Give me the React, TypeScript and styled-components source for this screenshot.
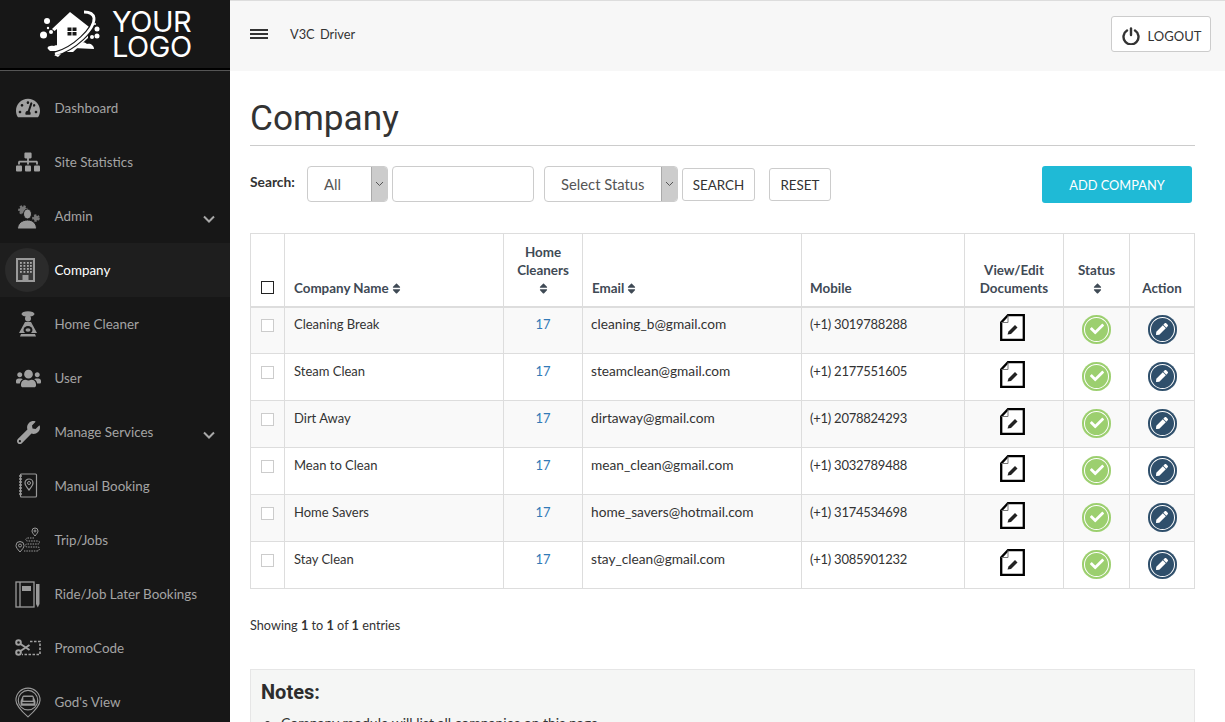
import React from 'react';
import styled, { createGlobalStyle } from 'styled-components';
import { FaTachometerAlt, FaSitemap, FaUsers, FaWrench, FaPen, FaCheck, FaSort } from 'react-icons/fa';

const Global = createGlobalStyle`
  html, body { margin: 0; padding: 0; background: #fff; overflow: hidden; }
  * { box-sizing: border-box; }
  body { font-family: "Lato", "Liberation Sans", sans-serif; color: #333; }
`;

const Page = styled.div`display: flex; width: 1225px; height: 722px; overflow: hidden;`;
const Sidebar = styled.aside`width: 230px; flex: none; background: #171717; display: flex; flex-direction: column;`;
const LogoBar = styled.div`
  height: 71px; flex: none; display: flex; align-items: center; gap: 12px; padding: 0 0 2px 40px;
  border-bottom: 1px solid #555; box-shadow: inset 0 -2px 0 #000;
`;
const LogoText = styled.div`color: #fff; font: 400 29px/25px "Inter", "Liberation Sans", sans-serif; letter-spacing: -0.5px; margin-top: 0;`;
const Menu = styled.nav`display: flex; flex-direction: column; padding-top: 10px;`;
const Item = styled.div<{ $active?: boolean }>`
  height: 54px; display: flex; align-items: center; position: relative; padding: 0 15px;
  background: ${p => (p.$active ? '#1e1e1e' : 'transparent')};
  color: ${p => (p.$active ? '#fff' : '#a4a4a4')};
  font-size: 13.4px;
`;
const IconSlot = styled.span<{ $active?: boolean }>`
  width: 26px; height: 44px; flex: none; display: flex; align-items: center; justify-content: center; margin-right: 13.5px; color: #a0a0a0; position: relative;
  &::before { content: ${p => (p.$active ? '""' : 'none')}; position: absolute; left: -10px; top: 0; width: 44px; height: 44px; border-radius: 50%; background: #2b2b2b; }
  svg { position: relative; }
`;
const ItemLabel = styled.span`flex: 1; white-space: nowrap;`;
const SubChevron = styled.svg`width: 12px; height: 8px; margin: 5px 0 0; fill: none; stroke: #a8a8a8; stroke-width: 2;`;
const Main = styled.main`flex: 1; min-width: 0; display: flex; flex-direction: column;`;
const TopBar = styled.header`
  height: 71px; flex: none; background: #f7f7f7; border-top: 1px solid #ddd; display: flex; align-items: center; padding: 0 14px 4px 20px;
`;
const Burger = styled.span`width: 18px; height: 10px; border-top: 2px solid #333; border-bottom: 2px solid #333; position: relative; margin-right: 22px;
  &::after { content: ""; position: absolute; left: 0; right: 0; top: 2px; height: 2px; background: #333; }
`;
const Brand = styled.span`font-size: 12.8px; color: #333; flex: 1; word-spacing: 2px;`;
const Logout = styled.button`
  width: 100px; height: 36px; background: #fff; border: 1px solid #ccc; border-radius: 3px; display: flex; align-items: center; justify-content: center; gap: 8px;
  font: 400 13px "Lato", sans-serif; color: #333; padding: 3px 0 0 1px;
`;
const Content = styled.div`padding: 0 30px 0 20px; display: flex; flex-direction: column;`;
const Title = styled.h1`
  margin: 0; height: 75px; padding-top: 25px; font: 400 35.2px/44px "Roboto", sans-serif; color: #333; border-bottom: 1px solid #ccc;
`;
const SearchRow = styled.div`display: flex; align-items: center; height: 38px; margin-top: 19px; padding-right: 3px;`;
const SearchLabel = styled.b`font-size: 13.8px; color: #333; width: 57px; margin-top: -5px;`;
const SelectBox = styled.div<{ $w: number }>`
  width: ${p => p.$w}px; height: 36px; border: 1px solid #ccc; border-radius: 4px; display: flex; align-items: center; justify-content: space-between; background: #fff; font-size: 14.8px; color: #555; padding-left: 16px; overflow: hidden;
`;
const Arrow = styled.span`width: 16px; height: 34px; background: #ccc; color: #555; border-left: 1px solid #aaa; display: flex; align-items: center; justify-content: center; svg { display: block; }`;
const TextInput = styled.input`width: 142px; height: 36px; border: 1px solid #ccc; border-radius: 4px; margin: 0 10px 0 4px; background: #fff;`;
const PlainButton = styled.button<{ $w: number; $ml: number }>`
  width: ${p => p.$w}px; margin-left: ${p => p.$ml}px; height: 33px; background: #fff; border: 1px solid #ccc; border-radius: 3px; font: 400 13.4px "Lato", sans-serif; color: #333; padding: 2px 0 0;
`;
const AddButton = styled.button`
  margin-left: auto; width: 150px; height: 37px; background: #1fbad6; border: 0; border-radius: 3px; color: #fff; font: 400 12.8px "Lato", sans-serif; padding: 1px 0 0;
`;
const Table = styled.table`
  width: 944px; margin-top: 30px; border-collapse: collapse; table-layout: fixed; font-size: 13px; border: 1px solid #ddd;
`;
const Th = styled.th<{ $center?: boolean; $tight?: boolean }>`
  height: 73px; border: 1px solid #ddd; border-bottom: 2px solid #ddd; vertical-align: bottom; padding: 8px 9px 9px ${p => (p.$tight ? 8 : 9)}px;
  text-align: ${p => (p.$center ? 'center' : 'left')}; font-size: 13.4px; line-height: 18px; font-weight: 700; color: #3f4a55;
`;
const Td = styled.td<{ $center?: boolean; $size?: number; $tight?: boolean }>`
  height: 47px; border: 1px solid #ddd; padding: 0 9px 13px ${p => (p.$tight ? 8 : 9)}px; text-align: ${p => (p.$center ? 'center' : 'left')}; vertical-align: middle; color: #333;
  font-size: ${p => p.$size ?? 13}px;
`;
const PhoneTd = styled(Td)`letter-spacing: -0.25px;`;
const IconTd = styled.td`height: 47px; border: 1px solid #ddd; padding: 0 0 2px; text-align: center; vertical-align: middle; svg { display: block; margin: 0 auto; }`;
const DocTd = styled(IconTd)`padding: 0 3px 5px 0;`;
const Row = styled.tr<{ $odd: boolean }>`background: ${p => (p.$odd ? '#f9f9f9' : '#fff')};`;
const Count = styled.a`color: #337ab7;`;
const RowCheck = styled.span`display: block; margin: 3px auto 0; width: 13px; height: 13px; border: 1px solid #ccc; background: #fff;`;
const HeadCheck = styled.span`display: block; margin: 0 auto 3px; width: 13px; height: 13px; border: 1px solid #222; background: #fff;`;
const SortMark = styled.span`display: inline-block; vertical-align: -2px; font-size: 13px; line-height: 0; color: #3f4a55; margin-left: 1px; svg { display: block; }`;
const Round = styled.span<{ $c: string }>`
  display: flex; margin: 0 auto; width: 29px; height: 29px; border-radius: 50%; background: ${p => p.$c}; align-items: center; justify-content: center; color: #fff; box-shadow: inset 0 0 0 2px ${p => p.$c}, inset 0 0 0 3px #fff;
`;
const Showing = styled.p`margin: 27px 0 0; font-size: 12.7px; line-height: 18px; color: #333;`;
const Notes = styled.section`margin-top: 35px; background: #f5f6f5; border: 1px solid #e6e6e6; padding: 10px 10px; height: 120px;`;
const NotesTitle = styled.h3`margin: 0; font: 700 20px/24px "Roboto", sans-serif; color: #2d2d2d;`;
const NotesList = styled.ul`margin: 10px 0 0; padding-left: 20px; font-size: 14px;`;

const CompanyIcon = () => (
  <svg width="24" height="24" viewBox="0 0 24 24" fill="none"><rect x="1" y="1" width="17" height="22" stroke="#9a9a9a" strokeWidth="2" fill="#3a3a3a" />
    {[4, 7, 10, 13].map(y => [4, 7.5, 11, 14].map(x => <rect key={`${x}-${y}`} x={x} y={y} width="1.8" height="1.8" fill="#aaa" />))}
    <rect x="6.500" y="17" width="6" height="6" fill="#9a9a9a" /></svg>
);
const AdminIcon = () => (
  <svg width="24" height="25" viewBox="0 0 24 25" fill="#9a9a9a">
    <circle cx="7" cy="6" r="3.600" fill="#777" stroke="#777" strokeWidth="2.500" strokeDasharray="2 1.400" />
    <circle cx="20" cy="14" r="2.600" fill="#777" stroke="#777" strokeWidth="2.500" strokeDasharray="2 1.400" />
    <ellipse cx="11.500" cy="10" rx="4" ry="5" stroke="#171717" strokeWidth="1" />
    <path d="M1.500 25c0-5 4-9 10-9s9 4 9 9z" stroke="#171717" strokeWidth="1" />
  </svg>
);
const CleanerIcon = () => (
  <svg width="20" height="26" viewBox="0 0 20 26" fill="#9a9a9a"><ellipse cx="10" cy="3" rx="6.500" ry="2.800" /><circle cx="10" cy="7.500" r="3" /><path d="M7 11h6l6 11H1z" /><ellipse cx="10" cy="19" rx="4.500" ry="4" fill="#171717" /><ellipse cx="10" cy="19" rx="2.500" ry="1.800" /><path d="M3 23h14l1 2.500H2z" /></svg>
);
const BookIcon = () => (
  <svg width="20" height="26" viewBox="0 0 20 26" fill="none" stroke="#9a9a9a"><rect x="2.500" y="1" width="16" height="23" rx="1" strokeWidth="1.200" /><path d="M1 3h3M1 6h3M1 9h3M1 12h3M1 15h3M1 18h3M1 21h3" strokeWidth="1.400" /><path d="M11 17c-3-3.500-4-5-4-7a4 4 0 0 1 8 0c0 2-1 3.500-4 7z" strokeWidth="1.200" /><circle cx="11" cy="10" r="1.500" strokeWidth="1" /></svg>
);
const TripIcon = () => (
  <svg width="26" height="26" viewBox="0 0 26 26" fill="none" stroke="#9a9a9a" strokeWidth="1"><path d="M20 9c-2-2.500-3-3.500-3-5a3 3 0 0 1 6 0c0 1.500-1 2.500-3 5z" /><circle cx="20" cy="4" r="1" /><path d="M5 25c-2.500-3-4-4.500-4-6.500a4 4 0 0 1 8 0c0 2-1.500 3.500-4 6.500z" /><circle cx="5" cy="18.500" r="1.500" /><path d="M19 11h-6c-3 0-3 3 0 3h10c2 0 2 3 0 3H12c-2 0-2 3 0 3h11c2 0 2 4-1 4H9" strokeDasharray="1.500 1" /></svg>
);
const LaterIcon = () => (
  <svg width="26" height="27" viewBox="0 0 26 27" fill="none" stroke="#9a9a9a"><rect x="1" y="1" width="18" height="25" strokeWidth="1.300" /><path d="M5 1v25" strokeWidth="1.300" /><rect x="7" y="5" width="9" height="5" fill="#9a9a9a" stroke="none" /><path d="M21 3h3.500v20l-1.700 3.500L21 23z" fill="#9a9a9a" stroke="none" /></svg>
);
const PromoIcon = () => (
  <svg width="26" height="18" viewBox="0 0 26 18" fill="none" stroke="#a0a0a0" strokeWidth="2"><circle cx="3.500" cy="3.500" r="2.300" /><circle cx="3.500" cy="13.500" r="2.300" /><path d="M5.500 5l9 6M5.500 12l9-6" /><path d="M15 2.500h10v13H7" strokeDasharray="2.500 1.500" strokeWidth="1.600" /></svg>
);
const GodIcon = () => (
  <svg width="28" height="33" viewBox="0 0 28 33" fill="none" stroke="#9a9a9a" strokeWidth="1.200"><path d="M14 32C5 24 1 19 1 14a13 13 0 0 1 26 0c0 5-4 10-13 18z" /><circle cx="14" cy="14" r="10.500" /><path d="M6 15l2-5c.3-.8 1-1 1.500-1h9c.5 0 1.200.2 1.500 1l2 5v5H6z" fill="#9a9a9a" stroke="none" /><rect x="9" y="10.500" width="10" height="4" fill="#171717" stroke="none" /><rect x="8" y="16" width="12" height="1.500" fill="#171717" stroke="none" /></svg>
);
const LogoMark = () => (
  <svg width="60" height="50" viewBox="0 0 60 50" fill="#fff">
    <path d="M30 3L12 20l2.500 2L17 20v19l3 4h13l15-14V19l3 .5L30 3z" />
    <path d="M27.500 18.500h4v3.500h-4zM32.500 18.500h4v3.500h-4zM27.500 23h4v3.500h-4zM32.500 23h4v3.500h-4z" fill="#171717" />
    <path d="M8 40c-2-3 4-4 6-3 1-1 5-1 6 1 3-1 7 1 6 4H10z" />
    <path d="M33 39c1-4 6-3 8-5 3-2 5 0 6 1 3-1 7 1 7 5z" />
    <path d="M15 45C34 40 55 20 54 9 53 3 47 3 44 3" fill="none" stroke="#171717" strokeWidth="5" />
    <path d="M15 45C34 40 55 20 54 9 53 3 47 3 44 3" fill="none" stroke="#fff" strokeWidth="2.800" />
    <path d="M14 46l7-1-3 3z" />
    <circle cx="3.500" cy="26" r="3.500" /><circle cx="7" cy="12" r="3" /><circle cx="11" cy="23" r="2" /><circle cx="8" cy="19" r="1.200" />
    <circle cx="57" cy="20" r="2.500" /><circle cx="57" cy="27" r="2.500" /><circle cx="52" cy="28" r="2" /><circle cx="55" cy="15" r="1" />
  </svg>
);
const DocIcon = () => (
  <svg width="25" height="27" viewBox="0 0 25 27" fill="none"><path d="M8 1.200h15.800v24.600H1.200V8.500z" stroke="#000" strokeWidth="2.300" fill="#fff" /><path d="M8 1.500V8.500H1.500" stroke="#777" strokeWidth="1" /><path d="M7.500 20.500l1-3 6.500-6.500 2.500 2.500-6.500 6.500z" fill="#222" /></svg>
);
const PowerIcon = () => (
  <svg width="18" height="18" viewBox="0 0 18 18" fill="none" stroke="#333" strokeWidth="2.400" strokeLinecap="round"><path d="M5 3.500a7.500 7.500 0 1 0 8 0" /><path d="M9 1.500v6.500" /></svg>
);
const Chevron = () => (
  <svg width="9" height="6" viewBox="0 0 9 6" fill="none" stroke="#555"><path d="M1 1l3.500 3.500L8 1" /></svg>
);

const menu: { label: string; icon: React.ReactNode; sub?: boolean; active?: boolean }[] = [
  { label: 'Dashboard', icon: <FaTachometerAlt size={24} /> },
  { label: 'Site Statistics', icon: <FaSitemap size={24} /> },
  { label: 'Admin', icon: <AdminIcon />, sub: true },
  { label: 'Company', icon: <CompanyIcon />, active: true },
  { label: 'Home Cleaner', icon: <CleanerIcon /> },
  { label: 'User', icon: <FaUsers size={25} /> },
  { label: 'Manage Services', icon: <FaWrench size={23} />, sub: true },
  { label: 'Manual Booking', icon: <BookIcon /> },
  { label: 'Trip/Jobs', icon: <TripIcon /> },
  { label: 'Ride/Job Later Bookings', icon: <LaterIcon /> },
  { label: 'PromoCode', icon: <PromoIcon /> },
  { label: "God's View", icon: <GodIcon /> },
];

const rows = [
  ['Cleaning Break', 'cleaning_b@gmail.com', '(+1) 3019788288'],
  ['Steam Clean', 'steamclean@gmail.com', '(+1) 2177551605'],
  ['Dirt Away', 'dirtaway@gmail.com', '(+1) 2078824293'],
  ['Mean to Clean', 'mean_clean@gmail.com', '(+1) 3032789488'],
  ['Home Savers', 'home_savers@hotmail.com', '(+1) 3174534698'],
  ['Stay Clean', 'stay_clean@gmail.com', '(+1) 3085901232'],
];

const Sort = () => <SortMark><FaSort /></SortMark>;

export default function App() {
  return (
    <Page>
      <Global />
      <Sidebar>
        <LogoBar>
          <LogoMark />
          <LogoText>YOUR<br />LOGO</LogoText>
        </LogoBar>
        <Menu>
          {menu.map(m => (
            <Item key={m.label} $active={m.active}>
              <IconSlot $active={m.active}>{m.icon}</IconSlot>
              <ItemLabel>{m.label}</ItemLabel>
              {m.sub && <SubChevron viewBox="0 0 12 8"><path d="M1 1.500l5 5 5-5" /></SubChevron>}
            </Item>
          ))}
        </Menu>
      </Sidebar>
      <Main>
        <TopBar>
          <Burger />
          <Brand>V3C Driver</Brand>
          <Logout><PowerIcon />LOGOUT</Logout>
        </TopBar>
        <Content>
          <Title>Company</Title>
          <SearchRow>
            <SearchLabel>Search:</SearchLabel>
            <SelectBox $w={81}>All<Arrow><Chevron /></Arrow></SelectBox>
            <TextInput />
            <SelectBox $w={134}>Select Status<Arrow><Chevron /></Arrow></SelectBox>
            <PlainButton $w={73} $ml={4}>SEARCH</PlainButton>
            <PlainButton $w={62} $ml={14}>RESET</PlainButton>
            <AddButton>ADD COMPANY</AddButton>
          </SearchRow>
          <Table>
            <colgroup>
              {[34, 219, 79, 219, 163, 99, 66, 65].map((w, i) => <col key={i} width={w} />)}
            </colgroup>
            <thead>
              <tr>
                <Th $center><HeadCheck /></Th>
                <Th>Company Name<Sort /></Th>
                <Th $center>Home Cleaners<br /><Sort /></Th>
                <Th>Email<Sort /></Th>
                <Th $tight>Mobile</Th>
                <Th $center>View/Edit Documents</Th>
                <Th $center>Status<br /><Sort /></Th>
                <Th $center>Action</Th>
              </tr>
            </thead>
            <tbody>
              {rows.map((r, i) => (
                <Row key={r[0]} $odd={i % 2 === 0}>
                  <Td $center><RowCheck /></Td>
                  <Td>{r[0]}</Td>
                  <Td $center><Count>17</Count></Td>
                  <Td $size={13.7} $tight>{r[1]}</Td>
                  <PhoneTd $tight>{r[2]}</PhoneTd>
                  <DocTd><DocIcon /></DocTd>
                  <IconTd><Round $c="#9ccf6f"><FaCheck size={14} /></Round></IconTd>
                  <IconTd><Round $c="#2f4f6b"><FaPen size={12} /></Round></IconTd>
                </Row>
              ))}
            </tbody>
          </Table>
          <Showing>Showing <b>1</b> to <b>1</b> of <b>1</b> entries</Showing>
          <Notes>
            <NotesTitle>Notes:</NotesTitle>
            <NotesList><li>Company module will list all companies on this page.</li></NotesList>
          </Notes>
        </Content>
      </Main>
    </Page>
  );
}
